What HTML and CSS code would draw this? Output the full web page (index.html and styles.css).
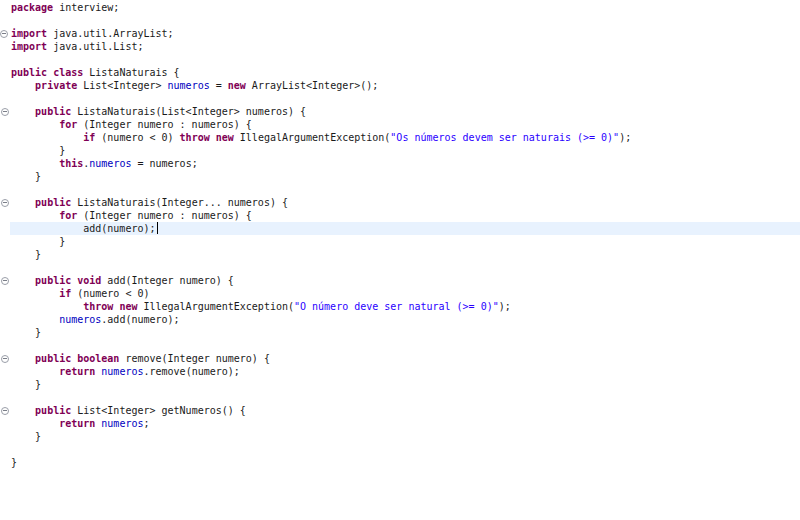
FILE: index.html
```html
<!DOCTYPE html>
<html>
<head>
<meta charset="utf-8">
<link rel="stylesheet" href="styles.css">
</head>
<body>
<div class="editor">
<div class="line"><span class="gut"></span><span class="code"><span class="kw">package</span> interview;</span></div>
<div class="line"><span class="gut"></span><span class="code"></span></div>
<div class="line"><span class="gut"><span class="fold imp"></span></span><span class="code"><span class="kw">import</span> java.util.ArrayList;</span></div>
<div class="line"><span class="gut"></span><span class="code"><span class="kw">import</span> java.util.List;</span></div>
<div class="line"><span class="gut"></span><span class="code"></span></div>
<div class="line"><span class="gut"></span><span class="code"><span class="kw">public</span> <span class="kw">class</span> ListaNaturais {</span></div>
<div class="line"><span class="gut"></span><span class="code">    <span class="kw">private</span> List&lt;Integer&gt; <span class="fd">numeros</span> = <span class="kw">new</span> ArrayList&lt;Integer&gt;();</span></div>
<div class="line"><span class="gut"></span><span class="code"></span></div>
<div class="line"><span class="gut"><span class="fold"></span></span><span class="code">    <span class="kw">public</span> ListaNaturais(List&lt;Integer&gt; numeros) {</span></div>
<div class="line"><span class="gut"></span><span class="code">        <span class="kw">for</span> (Integer numero : numeros) {</span></div>
<div class="line"><span class="gut"></span><span class="code">            <span class="kw">if</span> (numero &lt; 0) <span class="kw">throw</span> <span class="kw">new</span> IllegalArgumentException(<span class="str">"Os números devem ser naturais (&gt;= 0)"</span>);</span></div>
<div class="line"><span class="gut"></span><span class="code">        }</span></div>
<div class="line"><span class="gut"></span><span class="code">        <span class="kw">this</span>.<span class="fd">numeros</span> = numeros;</span></div>
<div class="line"><span class="gut"></span><span class="code">    }</span></div>
<div class="line"><span class="gut"></span><span class="code"></span></div>
<div class="line"><span class="gut"><span class="fold"></span></span><span class="code">    <span class="kw">public</span> ListaNaturais(Integer... numeros) {</span></div>
<div class="line"><span class="gut"></span><span class="code">        <span class="kw">for</span> (Integer numero : numeros) {</span></div>
<div class="line current"><span class="gut"></span><span class="code">            add(numero);<span class="caret"></span></span></div>
<div class="line"><span class="gut"></span><span class="code">        }</span></div>
<div class="line"><span class="gut"></span><span class="code">    }</span></div>
<div class="line"><span class="gut"></span><span class="code"></span></div>
<div class="line"><span class="gut"><span class="fold"></span></span><span class="code">    <span class="kw">public</span> <span class="kw">void</span> add(Integer numero) {</span></div>
<div class="line"><span class="gut"></span><span class="code">        <span class="kw">if</span> (numero &lt; 0)</span></div>
<div class="line"><span class="gut"></span><span class="code">            <span class="kw">throw</span> <span class="kw">new</span> IllegalArgumentException(<span class="str">"O número deve ser natural (&gt;= 0)"</span>);</span></div>
<div class="line"><span class="gut"></span><span class="code">        <span class="fd">numeros</span>.add(numero);</span></div>
<div class="line"><span class="gut"></span><span class="code">    }</span></div>
<div class="line"><span class="gut"></span><span class="code"></span></div>
<div class="line"><span class="gut"><span class="fold"></span></span><span class="code">    <span class="kw">public</span> <span class="kw">boolean</span> remove(Integer numero) {</span></div>
<div class="line"><span class="gut"></span><span class="code">        <span class="kw">return</span> <span class="fd">numeros</span>.remove(numero);</span></div>
<div class="line"><span class="gut"></span><span class="code">    }</span></div>
<div class="line"><span class="gut"></span><span class="code"></span></div>
<div class="line"><span class="gut"><span class="fold"></span></span><span class="code">    <span class="kw">public</span> List&lt;Integer&gt; getNumeros() {</span></div>
<div class="line"><span class="gut"></span><span class="code">        <span class="kw">return</span> <span class="fd">numeros</span>;</span></div>
<div class="line"><span class="gut"></span><span class="code">    }</span></div>
<div class="line"><span class="gut"></span><span class="code"></span></div>
<div class="line"><span class="gut"></span><span class="code">}</span></div>
</div>
</body>
</html>
```

FILE: styles.css
```css
html, body {
  margin: 0;
  padding: 0;
  background: #ffffff;
}

.editor {
  display: flex;
  flex-direction: column;
  width: 800px;
  height: 520px;
  padding-top: 1px;
  box-sizing: border-box;
  font-family: "DejaVu Sans Mono", "Liberation Mono", monospace;
  font-size: 10px;
  color: #1a1a1a;
}

.line {
  display: flex;
  height: 13px;
  line-height: 13px;
}

.line.current .code {
  background: #e8f2fe;
}

.gut {
  width: 10px;
  flex: 0 0 10px;
  display: flex;
  align-items: center;
  justify-content: center;
}

.code {
  flex: 1;
  display: block;
  white-space: pre;
  padding-left: 1px;
}

.fold {
  width: 6px;
  height: 6px;
  border: 1px solid #9a9ea8;
  border-radius: 50%;
  position: relative;
  box-sizing: content-box;
}

.fold::after {
  content: "";
  position: absolute;
  left: 1px;
  right: 1px;
  top: 2.5px;
  height: 1px;
  background: #7a7e88;
}

.fold.imp {
  margin-left: -2px;
}

.kw {
  color: #7f0055;
  font-weight: bold;
}

.fd {
  color: #0000c0;
}

.str {
  color: #2a00ff;
}

.caret {
  display: inline-block;
  width: 1px;
  height: 12px;
  background: #000;
  margin-left: 1px;
  vertical-align: -2px;
}
```
